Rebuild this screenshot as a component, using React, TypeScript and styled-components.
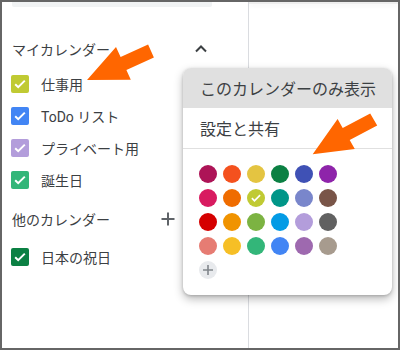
import styled, { createGlobalStyle } from "styled-components";

const GlobalStyle = createGlobalStyle`
  html, body {
    margin: 0;
    padding: 0;
    background: #fff;
  }
  body {
    font-family: Roboto, "Noto Sans CJK JP", "Noto Sans", sans-serif;
    color: #3c4043;
  }
`;

const Frame = styled.div`
  position: relative;
  box-sizing: border-box;
  width: 400px;
  height: 350px;
  border: 2px solid #666;
  display: flex;
  overflow: hidden;
  background: #fff;
`;

const Sidebar = styled.aside`
  width: 246px;
  flex-shrink: 0;
  border-right: 1px solid #dadce0;
  display: flex;
  flex-direction: column;
`;

const SearchStub = styled.div`
  margin-left: 10px;
  width: 200px;
  height: 7px;
  margin-top: -2px;
  background: #f1f3f4;
  border-radius: 0 0 2px 2px;
`;

const SectionHeader = styled.div<{ $width: number; $top: number }>`
  display: flex;
  align-items: center;
  box-sizing: border-box;
  width: ${(p) => p.$width}px;
  height: 32px;
  margin-top: ${(p) => p.$top}px;
  padding-left: 10px;
  font-size: 14px;
  color: #3c4043;
  letter-spacing: 0;
`;

const HeaderIcon = styled.span`
  margin-left: auto;
  width: 24px;
  height: 24px;
  display: flex;
  align-items: center;
  justify-content: center;
`;

const List = styled.ul<{ $top: number }>`
  list-style: none;
  margin: ${(p) => p.$top}px 0 0;
  padding: 0;
`;

const Row = styled.li`
  display: flex;
  align-items: center;
  gap: 12px;
  height: 32px;
  padding-left: 9px;
  font-size: 14px;
  color: #3c4043;
`;

const Box = styled.span<{ $color: string }>`
  width: 18px;
  height: 18px;
  border-radius: 2px;
  background: ${(p) => p.$color};
  display: flex;
  align-items: center;
  justify-content: center;
`;

const Main = styled.main`
  flex: 1;
  display: flex;
  flex-direction: column;
`;

const TopStrip = styled.div`
  height: 2px;
  background: #eeeeee;
  box-shadow: 0 2px 4px rgba(0, 0, 0, 0.06);
`;

const Popup = styled.div`
  position: absolute;
  left: 181px;
  top: 66px;
  width: 209px;
  background: #fff;
  border-radius: 8px;
  overflow: hidden;
  box-shadow: 0 4px 10px rgba(0, 0, 0, 0.28), 0 1px 3px rgba(0, 0, 0, 0.18);
`;

const MenuItem = styled.div<{ $active?: boolean }>`
  height: 40px;
  display: flex;
  align-items: center;
  padding-left: 17px;
  font-size: 16px;
  color: #3c4043;
  background: ${(p) => (p.$active ? "#e0e0e0" : "transparent")};
`;

const Divider = styled.div`
  height: 1px;
  background: #e0e0e0;
`;

const Palette = styled.div`
  display: grid;
  grid-template-columns: repeat(6, 18px);
  gap: 6px;
  padding: 16px 16px 16px 16px;
`;

const Swatch = styled.span<{ $color: string }>`
  width: 18px;
  height: 18px;
  border-radius: 50%;
  background: ${(p) => p.$color};
  display: flex;
  align-items: center;
  justify-content: center;
`;

const Overlay = styled.svg`
  position: absolute;
  left: -2px;
  top: -2px;
  width: 400px;
  height: 350px;
  pointer-events: none;
`;

const Check = ({ size = 14 }: { size?: number }) => (
  <svg width={size} height={size} viewBox="0 0 14 14">
    <path d="M2.2 7.2l3 3 6.6-6.6" fill="none" stroke="#fff" strokeWidth="2" />
  </svg>
);

const myCalendars = [
  { name: "仕事用", color: "#c0ca33" },
  { name: "ToDo リスト", color: "#4285f4" },
  { name: "プライベート用", color: "#b39ddb" },
  { name: "誕生日", color: "#33b679" },
];

const colors = [
  "#ad1457", "#f4511e", "#e4c441", "#0b8043", "#3f51b5", "#8e24aa",
  "#d81b60", "#ef6c00", "#c0ca33", "#009688", "#7986cb", "#795548",
  "#d50000", "#f09300", "#7cb342", "#039be5", "#b39ddb", "#616161",
  "#e67c73", "#f6bf26", "#33b679", "#4285f4", "#9e69af", "#a79b8e",
];

const selected = "#c0ca33";

export default function App() {
  return (
    <>
      <GlobalStyle />
      <Frame>
        <Sidebar>
          <SearchStub />
          <SectionHeader $width={211} $top={26}>
            マイカレンダー
            <HeaderIcon>
              <svg width="14" height="14" viewBox="0 0 14 14">
                <path d="M2 9.5l5-5 5 5" fill="none" stroke="#3c4043" strokeWidth="2" />
              </svg>
            </HeaderIcon>
          </SectionHeader>
          <List $top={3}>
            {myCalendars.map((c) => (
              <Row key={c.name}>
                <Box $color={c.color}>
                  <Check />
                </Box>
                {c.name}
              </Row>
            ))}
          </List>
          <SectionHeader $width={178} $top={7}>
            他のカレンダー
            <HeaderIcon>
              <svg width="14" height="14" viewBox="0 0 14 14">
                <path d="M7 0.5v13M0.5 7h13" fill="none" stroke="#5f6368" strokeWidth="2" />
              </svg>
            </HeaderIcon>
          </SectionHeader>
          <List $top={6}>
            <Row>
              <Box $color="#0b8043">
                <Check />
              </Box>
              日本の祝日
            </Row>
          </List>
        </Sidebar>
        <Main>
          <TopStrip />
        </Main>

        <Popup>
          <MenuItem $active>このカレンダーのみ表示</MenuItem>
          <MenuItem>設定と共有</MenuItem>
          <Divider />
          <Palette>
            {colors.map((c, i) => (
              <Swatch key={i} $color={c}>
                {c === selected && i === 8 ? <Check size={12} /> : null}
              </Swatch>
            ))}
            <Swatch $color="#e8eaed">
              <svg width="12" height="12" viewBox="0 0 12 12">
                <path d="M6 1v10M1 6h10" fill="none" stroke="#80868b" strokeWidth="1.6" />
              </svg>
            </Swatch>
          </Palette>
        </Popup>

        <Overlay viewBox="0 0 400 350">
          <polygon
            fill="#ff6600"
            points="87,80 116,47 120.6,57.1 148.1,44.6 153.9,57.4 126.4,69.9 130.8,79.7"
          />
          <polygon
            fill="#ff6600"
            points="312.7,154.3 337.6,118.9 342.7,127.9 370.2,113.4 377.2,125.6 349.7,140.1 354.8,149.1"
          />
        </Overlay>
      </Frame>
    </>
  );
}
